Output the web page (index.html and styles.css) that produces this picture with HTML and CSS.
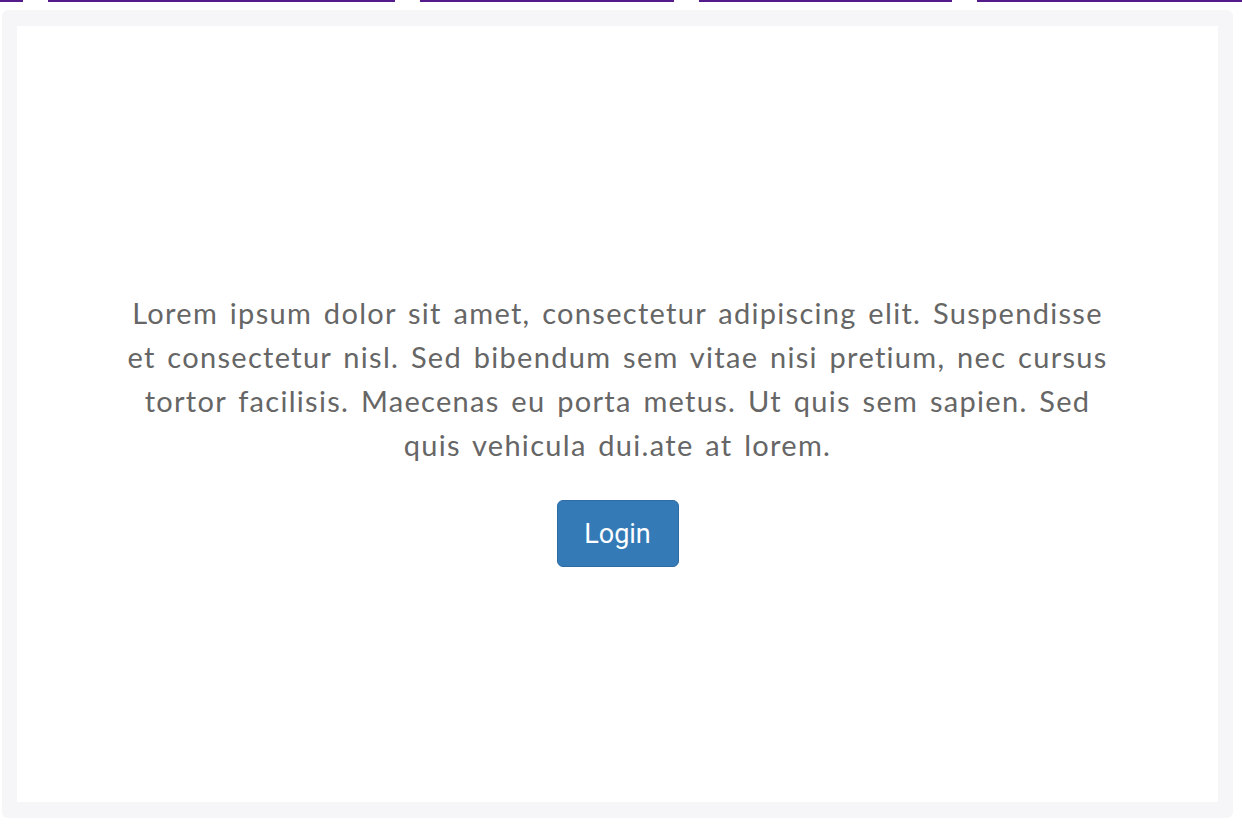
FILE: index.html
```html
<!DOCTYPE html>
<html lang="en">
<head>
<meta charset="utf-8">
<title>Login</title>
<link rel="stylesheet" href="styles.css">
</head>
<body>
<nav class="topnav">
  <a class="navlink w1" href="#">Hi</a>
  <a class="navlink w2" href="#">Developer portal</a>
  <a class="navlink w3" href="#">Getting started</a>
  <a class="navlink w4" href="#">Using the API</a>
  <a class="navlink w5" href="#">Support</a>
</nav>
<main class="frame">
  <section class="panel">
    <div class="intro">
      <p class="lead">Lorem ipsum dolor sit amet, consectetur adipiscing elit. Suspendisse et consectetur nisl. Sed bibendum sem vitae nisi pretium, nec cursus tortor facilisis. Maecenas eu porta metus. Ut quis sem sapien. Sed quis vehicula dui.ate at lorem.</p>
      <button class="btn-login" type="button">Login</button>
    </div>
  </section>
</main>
</body>
</html>
```

FILE: styles.css
```css
* { box-sizing: border-box; }
html, body { margin: 0; padding: 0; background: #ffffff; }
body { font-family: "Lato", "Noto Sans", sans-serif; overflow: hidden; }

.topnav {
  display: flex;
  gap: 25px;
  height: 32px;
  margin: -30px 0 0 -30px;
}
.navlink {
  display: block;
  flex: none;
  height: 32px;
  line-height: 28px;
  font-size: 18px;
  color: #551a8b;
  text-decoration: none;
  border-bottom: 2px solid #551a8b;
  white-space: nowrap;
  overflow: hidden;
}
.w1 { width: 53px; }
.w2 { width: 347px; }
.w3 { width: 254px; }
.w4 { width: 253px; }
.w5 { width: 300px; }

.frame {
  margin: 8px 9px 8px 2px;
  padding: 16px 15px 16px 15px;
  background: #f6f6f8;
  border-radius: 6px;
}
.panel {
  height: 776px;
  background: #ffffff;
  display: flex;
  align-items: center;
  justify-content: center;
  padding-top: 30px;
}
.intro {
  display: flex;
  flex-direction: column;
  align-items: center;
}
.lead {
  margin: 0 0 33px;
  width: 990px;
  text-align: center;
  font-size: 29px;
  line-height: 44px;
  letter-spacing: 1.3px;
  word-spacing: 3px;
  color: #666666;
}
.btn-login {
  width: 122px;
  height: 67px;
  padding: 0;
  font-family: "Roboto", "Liberation Sans", sans-serif;
  font-size: 27px;
  color: #ffffff;
  background: #337ab7;
  border: 1px solid #2e6da4;
  border-radius: 6px;
  cursor: pointer;
}
```
